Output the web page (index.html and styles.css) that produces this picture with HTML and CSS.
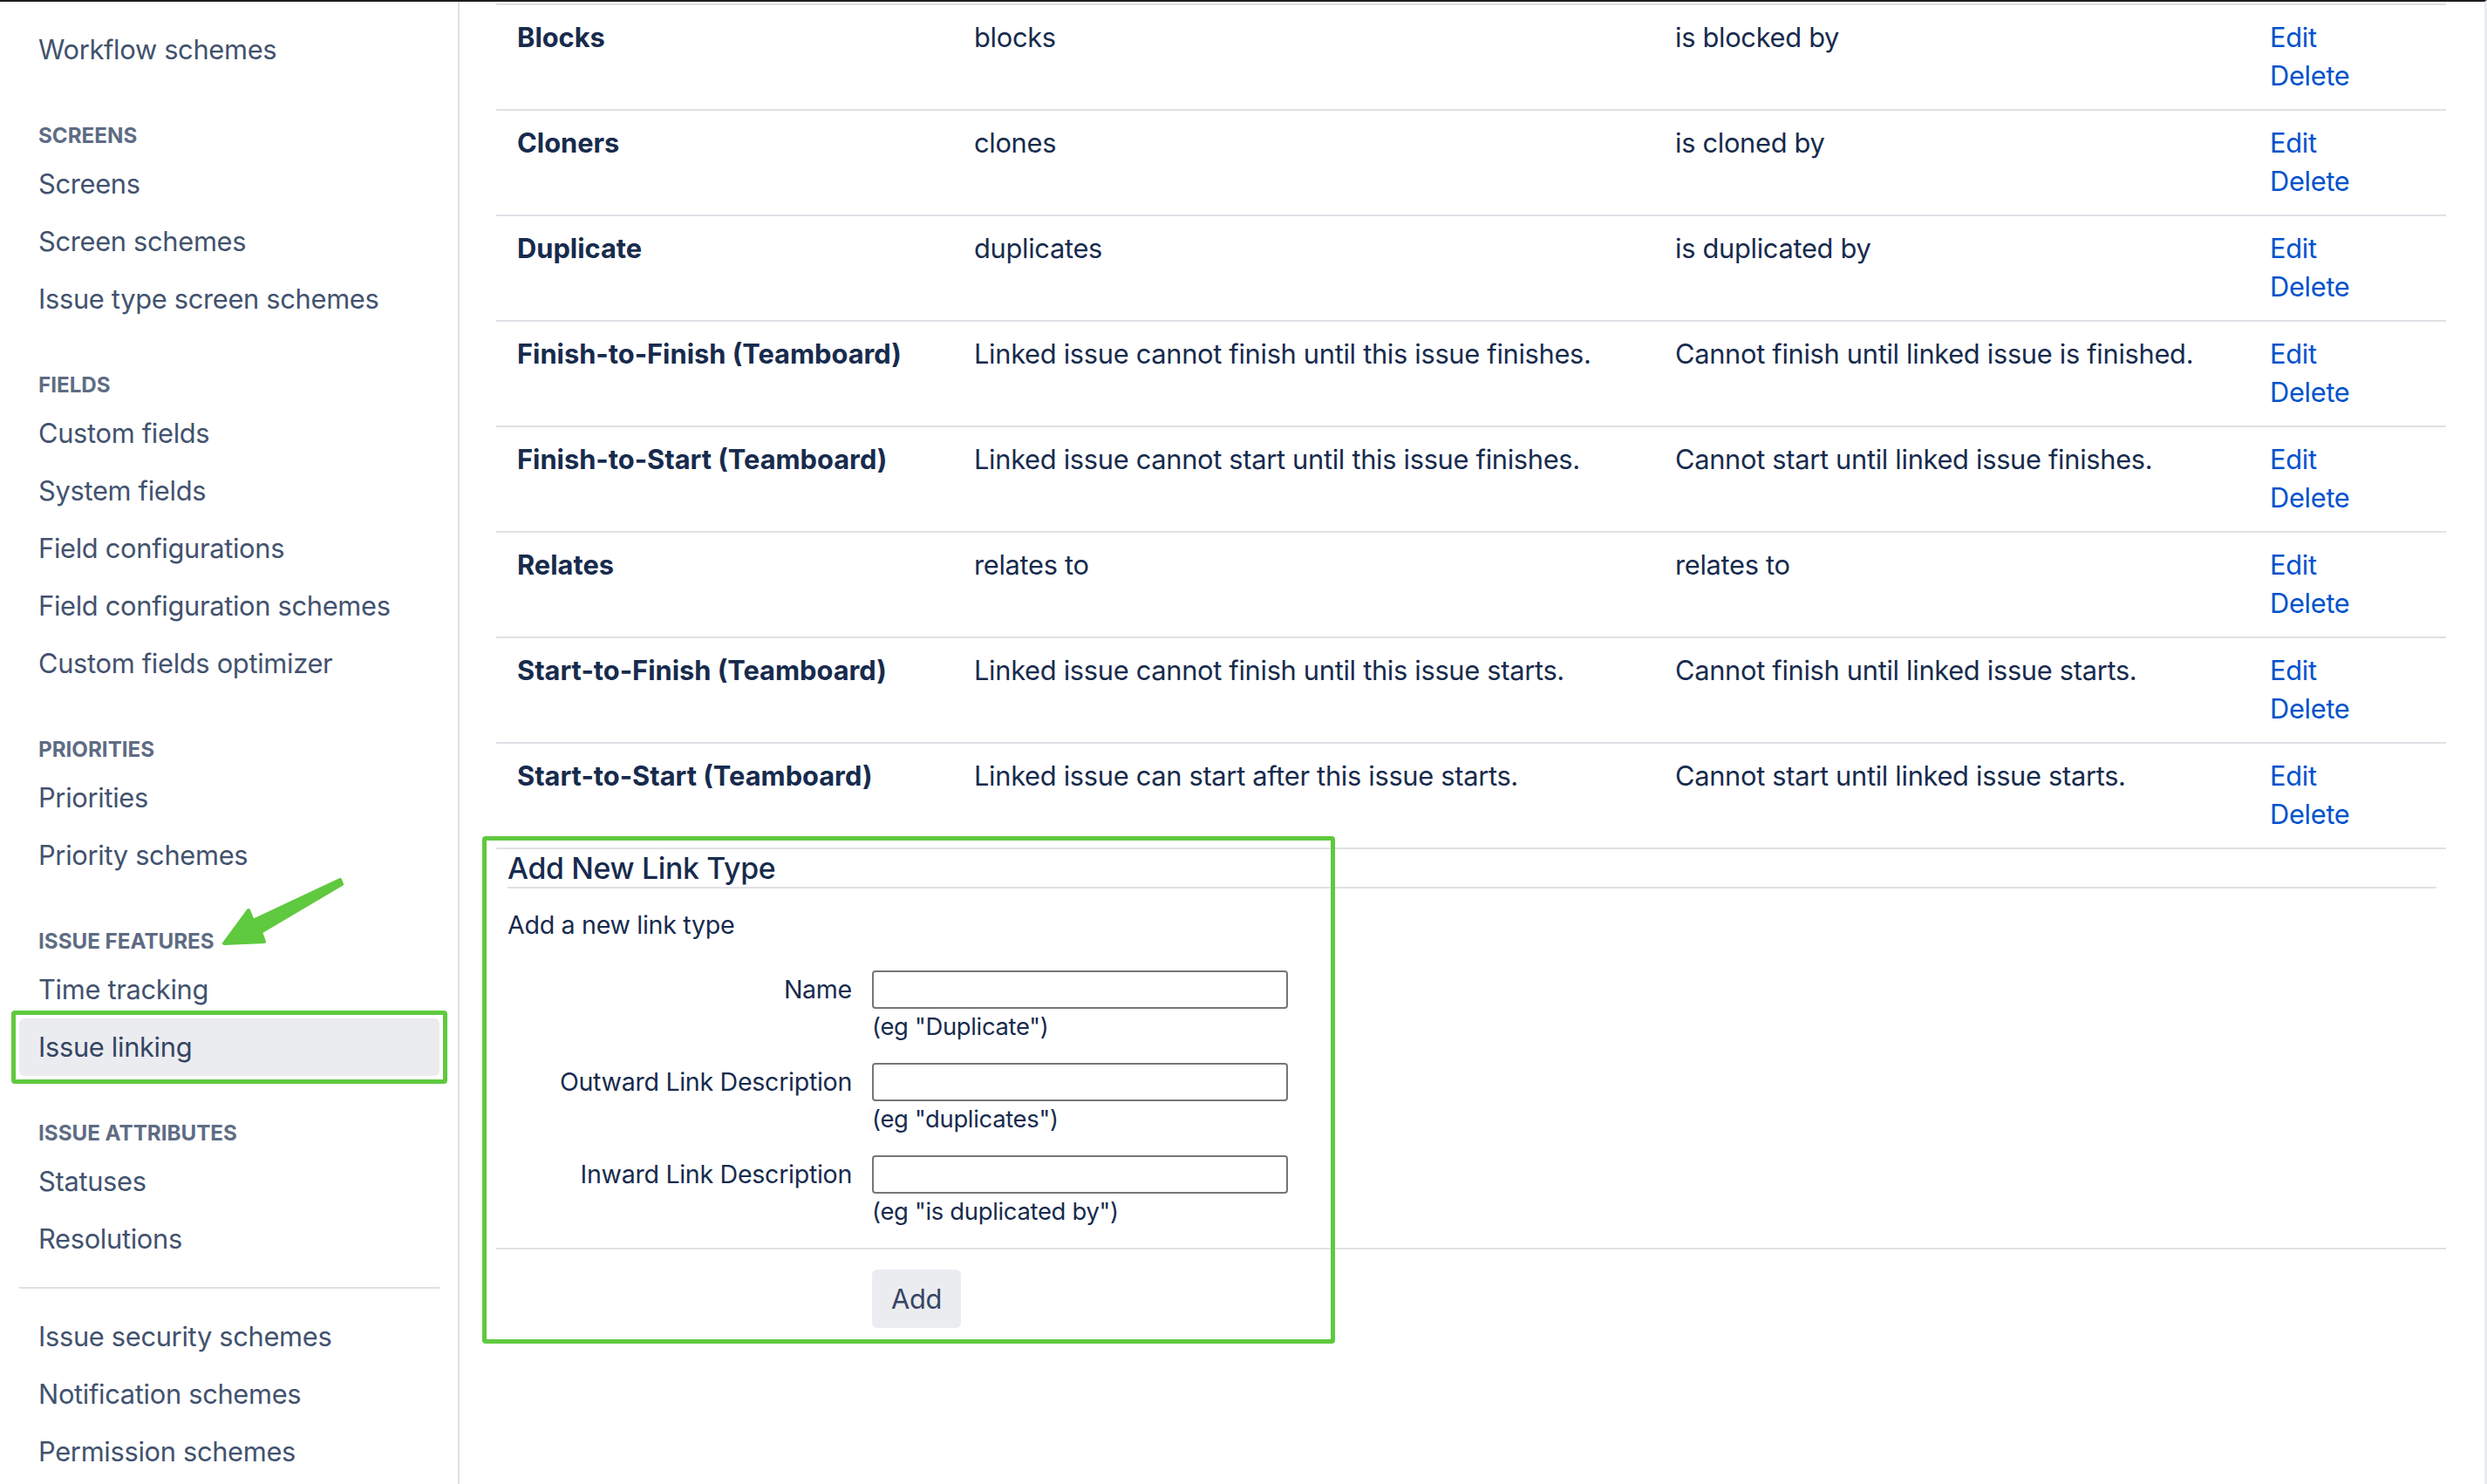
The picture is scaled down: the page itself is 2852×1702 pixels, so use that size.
FILE: index.html
```html
<!DOCTYPE html>
<html lang="en">
<head>
    <meta charset="UTF-8">
    <meta name="viewport" content="width=device-width, initial-scale=1.0">
    <title>Issue linking</title>
    <link rel="stylesheet" href="styles.css">
</head>
<body>
    <div class="page">
        <nav class="sidebar">
            <ul class="nav-list first">
                <li><a href="#">Workflows</a></li>
                <li><a href="#">Workflow schemes</a></li>
            </ul>

            <h4 class="nav-heading">Screens</h4>
            <ul class="nav-list">
                <li><a href="#">Screens</a></li>
                <li><a href="#">Screen schemes</a></li>
                <li><a href="#">Issue type screen schemes</a></li>
            </ul>

            <h4 class="nav-heading">Fields</h4>
            <ul class="nav-list">
                <li><a href="#">Custom fields</a></li>
                <li><a href="#">System fields</a></li>
                <li><a href="#">Field configurations</a></li>
                <li><a href="#">Field configuration schemes</a></li>
                <li><a href="#">Custom fields optimizer</a></li>
            </ul>

            <h4 class="nav-heading">Priorities</h4>
            <ul class="nav-list">
                <li><a href="#">Priorities</a></li>
                <li><a href="#">Priority schemes</a></li>
            </ul>

            <h4 class="nav-heading">Issue features</h4>
            <ul class="nav-list">
                <li><a href="#">Time tracking</a></li>
                <li><a href="#" class="active">Issue linking</a></li>
            </ul>

            <h4 class="nav-heading">Issue attributes</h4>
            <ul class="nav-list">
                <li><a href="#">Statuses</a></li>
                <li><a href="#">Resolutions</a></li>
            </ul>

            <hr class="nav-divider">

            <ul class="nav-list">
                <li><a href="#">Issue security schemes</a></li>
                <li><a href="#">Notification schemes</a></li>
                <li><a href="#">Permission schemes</a></li>
            </ul>

            <!-- annotation arrow pointing at the section -->
            <svg class="arrow" width="170" height="100" viewBox="0 0 170 100">
                <polygon points="150,9 50,56 45,44 17,82 63,80 59,69 152,14" fill="#5fc93f" stroke="#5fc93f" stroke-width="4" stroke-linejoin="round"/>
            </svg>
        </nav>

        <main class="content">
            <table class="link-types">
                <colgroup>
                    <col class="col-name">
                    <col class="col-outward">
                    <col class="col-inward">
                    <col class="col-ops">
                </colgroup>
                <tbody>
                    <tr>
                        <td class="name">Blocks</td>
                        <td>blocks</td>
                        <td>is blocked by</td>
                        <td class="ops"><a href="#">Edit</a><a href="#">Delete</a></td>
                    </tr>
                    <tr>
                        <td class="name">Cloners</td>
                        <td>clones</td>
                        <td>is cloned by</td>
                        <td class="ops"><a href="#">Edit</a><a href="#">Delete</a></td>
                    </tr>
                    <tr>
                        <td class="name">Duplicate</td>
                        <td>duplicates</td>
                        <td>is duplicated by</td>
                        <td class="ops"><a href="#">Edit</a><a href="#">Delete</a></td>
                    </tr>
                    <tr>
                        <td class="name">Finish-to-Finish (Teamboard)</td>
                        <td>Linked issue cannot finish until this issue finishes.</td>
                        <td>Cannot finish until linked issue is finished.</td>
                        <td class="ops"><a href="#">Edit</a><a href="#">Delete</a></td>
                    </tr>
                    <tr>
                        <td class="name">Finish-to-Start (Teamboard)</td>
                        <td>Linked issue cannot start until this issue finishes.</td>
                        <td>Cannot start until linked issue finishes.</td>
                        <td class="ops"><a href="#">Edit</a><a href="#">Delete</a></td>
                    </tr>
                    <tr>
                        <td class="name">Relates</td>
                        <td>relates to</td>
                        <td>relates to</td>
                        <td class="ops"><a href="#">Edit</a><a href="#">Delete</a></td>
                    </tr>
                    <tr>
                        <td class="name">Start-to-Finish (Teamboard)</td>
                        <td>Linked issue cannot finish until this issue starts.</td>
                        <td>Cannot finish until linked issue starts.</td>
                        <td class="ops"><a href="#">Edit</a><a href="#">Delete</a></td>
                    </tr>
                    <tr>
                        <td class="name">Start-to-Start (Teamboard)</td>
                        <td>Linked issue can start after this issue starts.</td>
                        <td>Cannot start until linked issue starts.</td>
                        <td class="ops"><a href="#">Edit</a><a href="#">Delete</a></td>
                    </tr>
                </tbody>
            </table>

            <form class="add-form" onsubmit="return false">
                <div class="callout"></div>
                <h3>Add New Link Type</h3>
                <p class="form-desc">Add a new link type</p>

                <div class="fields">
                    <div class="field-group">
                        <label for="link-name">Name</label>
                        <div class="field">
                            <input type="text" id="link-name">
                            <div class="hint">(eg "Duplicate")</div>
                        </div>
                    </div>
                    <div class="field-group">
                        <label for="link-outward">Outward Link Description</label>
                        <div class="field">
                            <input type="text" id="link-outward">
                            <div class="hint">(eg "duplicates")</div>
                        </div>
                    </div>
                    <div class="field-group">
                        <label for="link-inward">Inward Link Description</label>
                        <div class="field">
                            <input type="text" id="link-inward">
                            <div class="hint">(eg "is duplicated by")</div>
                        </div>
                    </div>
                </div>

                <div class="buttons">
                    <button type="submit">Add</button>
                </div>
            </form>
        </main>
    </div>
</body>
</html>
```

FILE: styles.css
```css
body {
    margin: 0;
    font-family: Inter, "Noto Sans", sans-serif;
    font-size: 30.8px;
    letter-spacing: -0.3px;
    color: #172b4d;
    background: #fff;
}

.page {
    display: flex;
    min-height: 100vh;
    box-sizing: border-box;
    border-top: 2px solid #1d1d1f;
    border-right: 3px solid #ebecf0;
    overflow: hidden;
}

/* sidebar */

.sidebar {
    position: relative;
    width: 527px;
    flex-shrink: 0;
    box-sizing: border-box;
    padding: 0 21px 0 22px;
    border-right: 2px solid #dfe1e6;
}

.nav-list {
    list-style: none;
    margin: 0;
    padding: 0;
}

.nav-list.first {
    margin-top: -44px;
}

.nav-list a {
    position: relative;
    display: block;
    height: 66px;
    line-height: 66px;
    padding-left: 22px;
    border-radius: 6px;
    color: #42526e;
    text-decoration: none;
}

.nav-list a.active {
    background-color: #ebecf0;
    color: #344563;
}

/* green highlight frame from the annotated screenshot */
.nav-list a.active::after {
    content: "";
    position: absolute;
    top: -9px;
    right: -9px;
    bottom: -9px;
    left: -9px;
    border: 5px solid #5fc93f;
    border-radius: 4px;
}

.nav-heading {
    margin: 50px 0 6px;
    padding-left: 22px;
    font-size: 24.2px;
    line-height: 32px;
    font-weight: 700;
    letter-spacing: 0;
    color: #5e6c84;
    text-transform: uppercase;
}

.nav-divider {
    margin: 22px 0;
    border: 0;
    border-top: 2px solid #dfe1e6;
}

.arrow {
    position: absolute;
    left: 240px;
    top: 998px;
}

/* main content */

.content {
    flex: 1;
    padding: 2px 0 0 42px;
}

.link-types {
    width: 2236px;
    table-layout: fixed;
    border-collapse: collapse;
    border-top: 2px solid #dfe1e6;
}

.col-name {
    width: 524px;
}

.col-outward {
    width: 804px;
}

.col-inward {
    width: 682px;
}

.col-ops {
    width: 226px;
}

.link-types td {
    padding: 15px 24px 16px;
    vertical-align: top;
    line-height: 44px;
    border-bottom: 2px solid #dfe1e6;
}

.link-types td.name {
    font-weight: 700;
    letter-spacing: 0;
}

.ops a {
    display: block;
    color: #0052cc;
    text-decoration: none;
}

.add-form {
    position: relative;
    width: 2236px;
    font-size: 28.6px;
}

.callout {
    position: absolute;
    left: -16px;
    top: -15px;
    width: 978px;
    height: 582px;
    box-sizing: border-box;
    border: 5px solid #5fc93f;
    border-radius: 4px;
    pointer-events: none;
}

.add-form h3 {
    margin: 0 11px 0 13px;
    font-size: 33.8px;
    line-height: 43px;
    font-weight: 500;
    border-bottom: 2px solid #dfe1e6;
}

.form-desc {
    margin: 20px 11px 0 13px;
    line-height: 44px;
}

.fields {
    margin-top: 30px;
}

.field-group {
    display: flex;
    margin-bottom: 24px;
}

.field-group label {
    width: 408px;
    margin-right: 23px;
    text-align: right;
    line-height: 44px;
}

.field-group input {
    display: block;
    width: 477px;
    height: 44px;
    box-sizing: border-box;
    margin: 0;
    padding: 0 8px;
    border: 2px solid #767676;
    border-radius: 4px;
    font: inherit;
}

.hint {
    margin-top: 2px;
    font-size: 27.4px;
    line-height: 36px;
}

.buttons {
    border-top: 2px solid #dfe1e6;
    padding: 23px 0 0 431px;
}

.buttons button {
    width: 102px;
    height: 67px;
    border: none;
    border-radius: 6px;
    background-color: #ebecf0;
    color: #344563;
    font-family: inherit;
    font-size: 30.8px;
    letter-spacing: -0.3px;
    cursor: pointer;
}
```
